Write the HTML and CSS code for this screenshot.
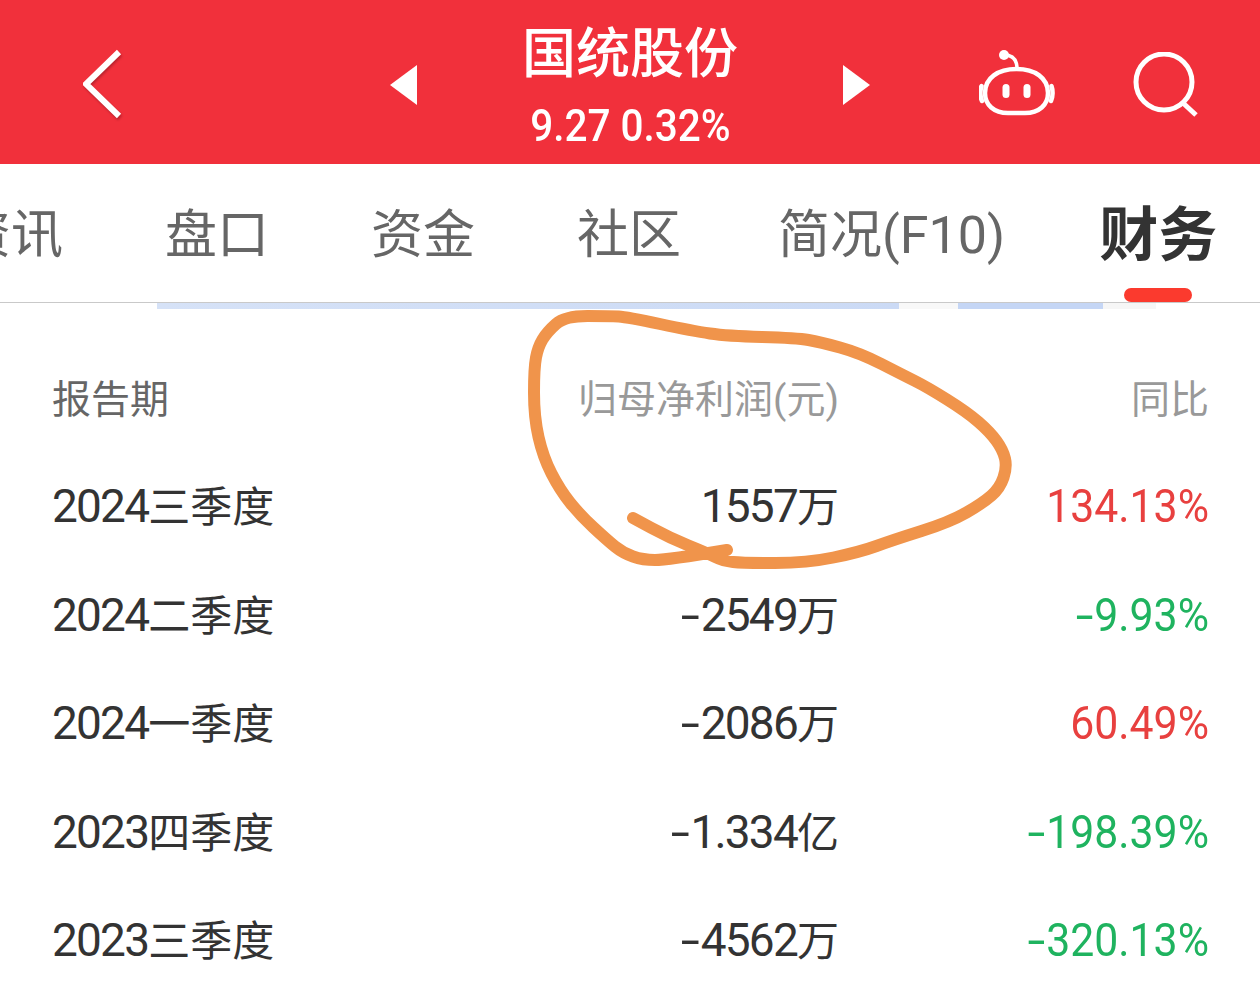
FILE: index.html
```html
<!DOCTYPE html>
<html lang="zh-CN">
<head>
    <meta charset="UTF-8">
    <title>国统股份 - 财务</title>
    <link rel="stylesheet" href="styles.css">
</head>
<body>
    <div class="page">
        <!-- Top bar -->
        <header class="topbar">
            <svg class="icon-back" width="40" height="72" viewBox="0 0 40 72">
                <path d="M36 4 L3 36 L36 68" fill="none" stroke="#fff" stroke-width="6"/>
            </svg>
            <div class="stock">
                <span class="tri tri-left"></span>
                <div class="stock-info">
                    <div class="stock-name">国统股份</div>
                    <div class="stock-price">9.27 0.32%</div>
                </div>
                <span class="tri tri-right"></span>
            </div>
            <svg class="icon-robot" width="76" height="70" viewBox="0 0 76 70">
                <circle cx="25" cy="5" r="5" fill="#fff"/>
                <path d="M25 5 C33 5 38 9 38 19" fill="none" stroke="#fff" stroke-width="3.5"/>
                <path d="M37.5 19 C56 19 69 28 69 43 C69 55 60 63 46 63 L29 63 C15 63 6 55 6 43 C6 28 19 19 37.5 19 Z" fill="none" stroke="#fff" stroke-width="4.5"/>
                <path d="M2.5 36 C1 40 1 47 3 51 M72.5 36 C74 40 74 47 72 51" fill="none" stroke="#fff" stroke-width="4.5" stroke-linecap="round"/>
                <rect x="23.5" y="34" width="7" height="14" rx="3.5" fill="#fff"/>
                <rect x="44.5" y="34" width="7" height="14" rx="3.5" fill="#fff"/>
            </svg>
            <svg class="icon-search" width="66" height="66" viewBox="0 0 66 66">
                <circle cx="31" cy="30" r="28" fill="none" stroke="#fff" stroke-width="5"/>
                <path d="M50 51 L63 63" fill="none" stroke="#fff" stroke-width="5"/>
            </svg>
        </header>

        <!-- Tabs -->
        <nav class="tabs">
            <div class="tab">资讯</div>
            <div class="tab">盘口</div>
            <div class="tab">资金</div>
            <div class="tab">社区</div>
            <div class="tab tab-wide">简况(F10)</div>
            <div class="tab tab-active">财务</div>
        </nav>
        <div class="strip"></div>

        <!-- Table -->
        <div class="table">
            <div class="row row-head">
                <div class="cell-period">报告期</div>
                <div class="cell-num">归母净利润(元)</div>
                <div class="cell-num">同比</div>
            </div>
            <div class="row">
                <div class="cell-period"><span class="num">2024</span>三季度</div>
                <div class="cell-num"><span class="num">1557</span>万</div>
                <div class="cell-pct up">134.13%</div>
            </div>
            <div class="row">
                <div class="cell-period"><span class="num">2024</span>二季度</div>
                <div class="cell-num"><span class="minus">-</span><span class="num">2549</span>万</div>
                <div class="cell-pct down"><span class="minus">-</span>9.93%</div>
            </div>
            <div class="row">
                <div class="cell-period"><span class="num">2024</span>一季度</div>
                <div class="cell-num"><span class="minus">-</span><span class="num">2086</span>万</div>
                <div class="cell-pct up">60.49%</div>
            </div>
            <div class="row">
                <div class="cell-period"><span class="num">2023</span>四季度</div>
                <div class="cell-num"><span class="minus">-</span><span class="num">1.334</span>亿</div>
                <div class="cell-pct down"><span class="minus">-</span>198.39%</div>
            </div>
            <div class="row">
                <div class="cell-period"><span class="num">2023</span>三季度</div>
                <div class="cell-num"><span class="minus">-</span><span class="num">4562</span>万</div>
                <div class="cell-pct down"><span class="minus">-</span>320.13%</div>
            </div>
        </div>

        <!-- Hand drawn circle on top of the screenshot -->
        <svg class="scribble" width="1260" height="999" viewBox="0 0 1260 999">
            <path d="M633 518 L651.5 528 Q670 538 688.5 545.5 Q707 553 715 557 Q723 561 733 562 Q743 563 775 563 Q807 563 833.5 557.5 Q860 552 876.5 546 Q893 540 921.5 531 Q950 522 966.5 512.5 Q983 503 991.5 495.5 Q1000 488 1003.5 477.5 Q1007 467 1005 458.5 Q1003 450 996.5 441 Q990 432 978.5 422 Q967 412 947 399.5 Q927 387 915 381 Q903 375 881.5 364 Q860 353 840 347.5 Q820 342 808.5 340 Q797 338 762 337 Q727 336 710 333.5 Q693 331 660 324 Q627 317 618.5 316.5 Q610 316 587.5 316 Q565 316 556 324 Q547 332 542.5 339.5 Q538 347 536 357.5 Q534 368 534 392.5 Q534 417 538.5 437 Q543 457 551.5 473.5 Q560 490 570 502.5 Q580 515 593.5 527.5 Q607 540 615 546.5 Q623 553 633 556.5 Q643 560 655 560 Q667 560 727 550" fill="none" stroke="#f0944b" stroke-width="12" stroke-linecap="round" stroke-linejoin="round"/>
        </svg>
    </div>
</body>
</html>
```

FILE: styles.css
```css
* {
    margin: 0;
    padding: 0;
    box-sizing: border-box;
}

body {
    font-family: Roboto, 'Noto Sans CJK SC', sans-serif;
    background: #fff;
    color: #333;
}

.page {
    position: relative;
    width: 1260px;
    height: 999px;
    overflow: hidden;
}

.topbar {
    display: flex;
    align-items: center;
    height: 164px;
    background: #f1303b;
    color: #fff;
    padding-left: 83px;
}

.icon-back {
    flex: none;
    margin-top: 3px;
    filter: drop-shadow(1px 2px 1px rgba(120, 20, 30, 0.45));
}

.stock {
    flex: none;
    display: flex;
    align-items: center;
    justify-content: space-between;
    width: 480px;
    height: 164px;
    margin-left: 267px;
    padding-top: 6px;
}

.stock-info {
    align-self: flex-start;
    padding-top: 16px;
    text-align: center;
}

.stock-name {
    font-size: 54px;
    font-weight: 500;
    line-height: 66px;
}

.stock-price {
    margin-top: 13px;
    font-size: 45px;
    font-weight: 500;
    line-height: 50px;
    transform: scaleX(0.9);
}

.tri {
    width: 0;
    height: 0;
    border-top: 20px solid transparent;
    border-bottom: 20px solid transparent;
}

.tri-left {
    border-right: 27px solid #fff;
}

.tri-right {
    border-left: 27px solid #fff;
}

.icon-robot {
    flex: none;
    margin-left: 109px;
    margin-top: 6px;
}

.icon-search {
    flex: none;
    margin-left: 78px;
    margin-top: 6px;
}

.tabs {
    display: flex;
    align-items: center;
    gap: 102px;
    height: 139px;
    margin-left: -41px;
    padding-top: 6px;
    border-bottom: 1px solid #c9c9c9;
    font-size: 52px;
    color: #666;
    white-space: nowrap;
}

.tab {
    position: relative;
    line-height: 70px;
}

.tab-wide {
    margin-left: -5px;
}

.tab-active {
    margin-left: -8px;
    font-size: 59px;
    font-weight: 700;
    color: #333;
}

/* red marker sits on the tab border */
.tab-active::after {
    content: "";
    position: absolute;
    left: 25px;
    bottom: -31px;
    width: 68px;
    height: 14px;
    border-radius: 7px;
    background: #fb3a2e;
}

/* bit of the chart scrolled under the tabs */
.strip {
    height: 6px;
    margin-bottom: 41px;
    background: linear-gradient(90deg,
        #fff 157px, #d6e2f7 157px, #cbdaf5 899px, #f8f8f8 899px,
        #f8f8f8 958px, #c5d6f5 958px, #c5d6f5 1103px, #f6f6f6 1103px,
        #f6f6f6 1156px, #fff 1156px);
}

.table {
    padding-left: 52px;
}

.row {
    display: grid;
    grid-template-columns: 301px 486px 370px;
    align-items: baseline;
    height: 108.5px;
    line-height: 108.5px;
    font-size: 42px;
    color: #333;
}

.row-head {
    height: 102px;
    line-height: 100px;
    font-size: 39px;
    color: #999;
}

.row-head .cell-period {
    color: #666;
}

.cell-num {
    text-align: right;
}

/* digits in the app font are tall and narrow */
.num {
    font-size: 46px;
    letter-spacing: -1.8px;
}

.minus {
    display: inline-block;
    margin: 0 4px;
    font-size: 46px;
    line-height: 1;
    transform: scaleX(1.5);
}

.cell-pct {
    font-size: 46px;
    text-align: right;
    transform: scaleX(0.93);
    transform-origin: right;
}

.up {
    color: #e8403f;
}

.down {
    color: #1fb35f;
}

.scribble {
    position: absolute;
    left: 0;
    top: 0;
}
```
